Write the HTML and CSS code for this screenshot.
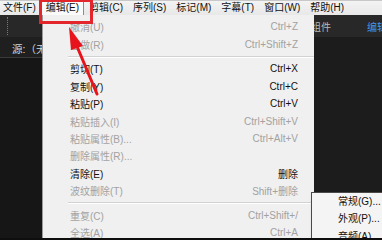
FILE: index.html
```html
<!DOCTYPE html>
<html lang="zh-CN">
<head>
<meta charset="utf-8">
<title>编辑菜单</title>
<link rel="stylesheet" href="styles.css">
</head>
<body>
<div class="screen">
  <div class="menubar">
    <span class="mi">文件(F)</span>
    <span class="mi active">编辑(E)</span>
    <span class="mi">剪辑(C)</span>
    <span class="mi">序列(S)</span>
    <span class="mi">标记(M)</span>
    <span class="mi">字幕(T)</span>
    <span class="mi">窗口(W)</span>
    <span class="mi">帮助(H)</span>
  </div>
  <div class="wsbar">
    <span class="grip"></span>
    <div class="ws-tabs">
      <span class="ws-tab">组件</span>
      <span class="ws-tab current">编辑</span>
    </div>
  </div>
  <div class="panels">
    <div class="src-panel">
      <div class="panel-head">源:（无剪辑）</div>
      <div class="panel-body"></div>
    </div>
    <div class="prog-panel"></div>
  </div>

  <div class="dropdown">
    <div class="item dis"><span>撤消(U)</span><span>Ctrl+Z</span></div>
    <div class="item dis"><span>重做(R)</span><span>Ctrl+Shift+Z</span></div>
    <div class="sep"></div>
    <div class="item"><span>剪切(T)</span><span>Ctrl+X</span></div>
    <div class="item"><span>复制(Y)</span><span>Ctrl+C</span></div>
    <div class="item"><span>粘贴(P)</span><span>Ctrl+V</span></div>
    <div class="item dis"><span>粘贴插入(I)</span><span>Ctrl+Shift+V</span></div>
    <div class="item dis"><span>粘贴属性(B)...</span><span>Ctrl+Alt+V</span></div>
    <div class="item dis"><span>删除属性(R)...</span><span></span></div>
    <div class="item"><span>清除(E)</span><span>删除</span></div>
    <div class="item dis"><span>波纹删除(T)</span><span>Shift+删除</span></div>
    <div class="sep"></div>
    <div class="item dis"><span>重复(C)</span><span>Ctrl+Shift+/</span></div>
    <div class="item dis"><span>全选(A)</span><span>Ctrl+A</span></div>
  </div>

  <div class="submenu">
    <div class="sub-item">常规(G)...</div>
    <div class="sub-item">外观(P)...</div>
    <div class="sub-item">音频(A)...</div>
  </div>

  <div class="redbox"></div>
  <svg class="arrow" width="382" height="240" viewBox="0 0 382 240">
    <line x1="97" y1="94" x2="76" y2="44" stroke="#e8141c" stroke-width="3" stroke-linecap="round"/>
    <polygon points="69,27 83,46 71,50" fill="#e8141c"/>
  </svg>
</div>
</body>
</html>
```

FILE: styles.css
```css
* { box-sizing: border-box; }

body {
  margin: 0;
  width: 382px;
  height: 240px;
  overflow: hidden;
  background: #0e0e0e;
  font-family: "Liberation Sans", "Noto Sans CJK SC", sans-serif;
  font-size: 10px;
}

.screen {
  position: relative;
  width: 382px;
  height: 240px;
  border-bottom: 2px solid #0e0e0e;
  overflow: hidden;
  display: flex;
  flex-direction: column;
  background: #1a1a1a;
}

.menubar {
  height: 15px;
  flex: none;
  display: flex;
  align-items: center;
  background: linear-gradient(#f3f3f3, #e8e8e8);
  border-top: 1px solid #c8c8c8;
  color: #111;
  white-space: nowrap;
}

.mi {
  padding: 0 5px;
  height: 14px;
  line-height: 14px;
}

.mi:first-child { padding-left: 3px; }

.mi.active {
  background: #fafafa;
  box-shadow: inset 1px 1px 0 #8c8c8c, inset -1px 0 0 #8c8c8c;
}

.wsbar {
  height: 22px;
  flex: none;
  display: flex;
  align-items: center;
  background: #282828;
  color: #b9b9b9;
  white-space: nowrap;
}

.grip {
  width: 0;
  height: 18px;
  margin-left: 7px;
  border-left: 1px dotted #7a7a7a;
}

.ws-tabs {
  margin-left: auto;
  margin-right: -5px;
  display: flex;
  gap: 36px;
  font-size: 10px;
}

.ws-tab.current { color: #3f97f0; }

.panels {
  flex: 1;
  display: flex;
}

.src-panel {
  width: 220px;
  display: flex;
  flex-direction: column;
}

.panel-head {
  height: 21px;
  padding: 3px 0 0 12px;
  line-height: 18px;
  color: #d6d6d6;
  font-size: 10.5px;
  background: #1f1f1f;
  border-bottom: 1px solid #3a3a3a;
  white-space: nowrap;
}

.panel-body {
  flex: 1;
  background: #161616;
}

.prog-panel {
  flex: 1;
  background: #1c1c1c;
}

.dropdown {
  position: absolute;
  left: 42px;
  top: 15px;
  width: 272px;
  height: 240px;
  padding-top: 3px;
  background: #f0f0f0;
  border-left: 1px solid #9a9a9a;
  color: #111;
}

.item {
  height: 17.4px;
  display: flex;
  align-items: center;
  justify-content: space-between;
  padding: 0 16px 0 27px;
  white-space: nowrap;
}

.item.dis { color: #a2a2a2; }

.sep {
  height: 0;
  margin: 3px 0 2.5px 25px;
  border-top: 1px solid #d2d2d2;
  border-bottom: 1px solid #ffffff;
}

.submenu {
  position: absolute;
  left: 311px;
  top: 192px;
  width: 80px;
  height: 60px;
  background: #f4f4f4;
  border: 1px solid #4a4a4a;
  box-shadow: 2px 2px 3px rgba(0, 0, 0, 0.4);
  color: #111;
}

.sub-item {
  height: 17.4px;
  line-height: 17.4px;
  padding-left: 26px;
  white-space: nowrap;
}

.redbox {
  position: absolute;
  left: 39px;
  top: -1px;
  width: 54px;
  height: 25px;
  border: 3px solid #e3262b;
}

.arrow {
  position: absolute;
  left: 0;
  top: 0;
  pointer-events: none;
}
```
